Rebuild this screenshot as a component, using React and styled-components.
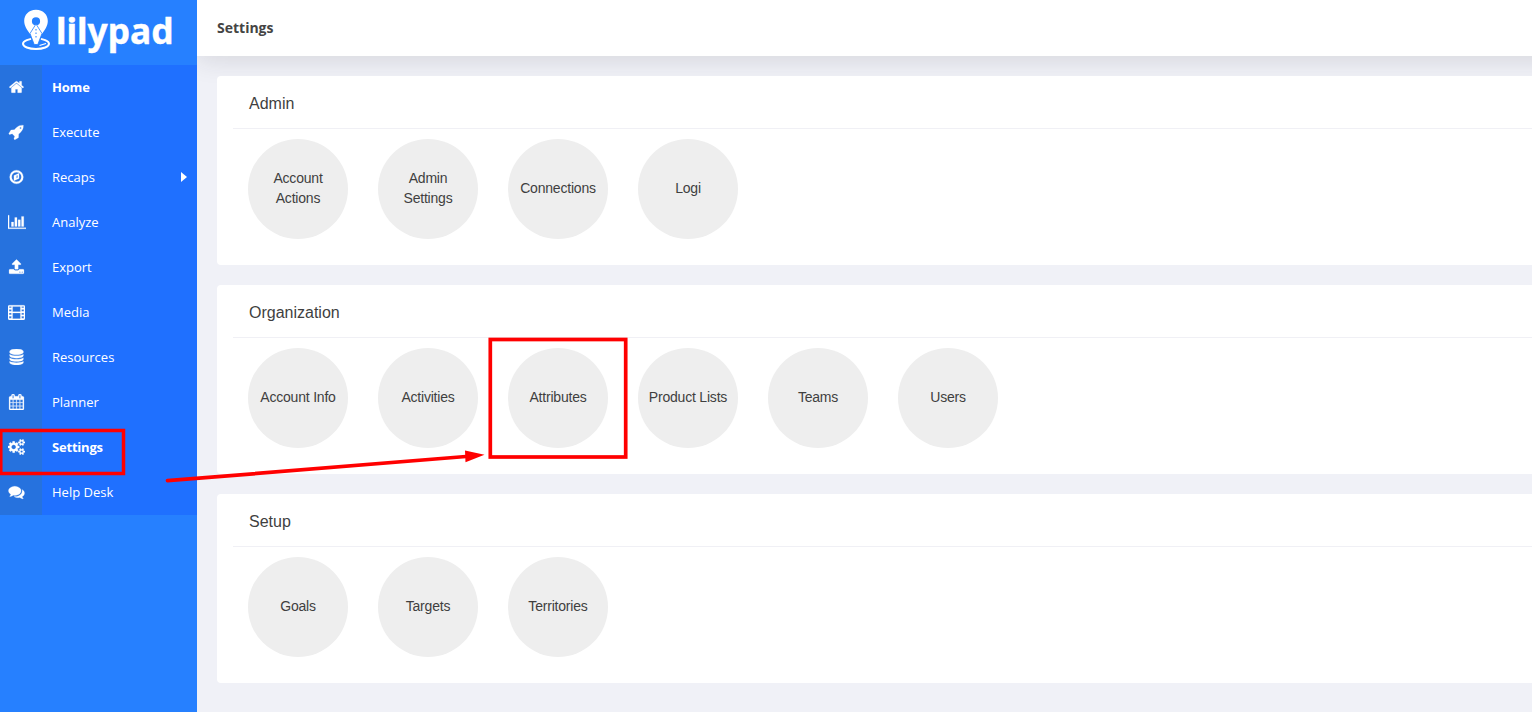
import React from 'react';
import styled, { createGlobalStyle } from 'styled-components';

const GlobalStyle = createGlobalStyle`
  * {
    box-sizing: border-box;
  }

  body {
    margin: 0;
    overflow: hidden;
    background-color: #f0f1f7;
    font-family: 'Open Sans', sans-serif;
  }
`;

const Layout = styled.div`
  position: relative;
  display: flex;
  width: 100%;
  height: 100vh;
  overflow: hidden;
`;

/*Sidebar*/
const Sidebar = styled.aside`
  z-index: 2;
  flex: none;
  width: 197px;
  background-color: #2680ff;
`;

const Brand = styled.div`
  display: flex;
  height: 65px;
  padding: 4px 0 0 18px;
`;

const NavItem = styled.a`
  display: flex;
  align-items: stretch;
  height: 45px;
  background-color: #1f70ff;
  color: #fff;
  font-size: 13px;
  font-weight: ${(props) => (props.$bold ? 700 : 400)};
  letter-spacing: ${(props) => (props.$bold ? '-0.2px' : 'normal')};
  line-height: 44px;
  cursor: pointer;
`;

const NavIcon = styled.span`
  display: flex;
  justify-content: center;
  align-items: center;
  width: 42px;
  padding: 0 9px 2px 0;
  background-color: #2672de;

  svg {
    flex: none;
    height: 16px;
    fill: currentColor;
    stroke: currentColor;
    stroke-width: 24px;
  }
`;

const NavLabel = styled.span`
  flex: 1;
  padding-left: 10px;
`;

const Caret = styled.span`
  align-self: center;
  margin-right: 10px;
  margin-bottom: 1px;
  border: 5px solid transparent;
  border-left: 6px solid #fff;
  border-right: 0;
`;

/*Main Body*/
const Main = styled.main`
  display: flex;
  flex: 1;
  flex-direction: column;
  min-width: 0;
`;

const TopBar = styled.header`
  display: flex;
  flex: none;
  align-items: center;
  height: 56px;
  margin-right: -40px;
  padding: 0 0 2px 20px;
  background-color: #fff;
  box-shadow: 0 4px 26px rgba(40, 40, 50, 0.13);
  color: #444;
  font-size: 14px;
  font-weight: 700;
`;

const Panels = styled.div`
  position: relative;
  display: flex;
  flex-direction: column;
  gap: 20px;
  padding: 20px 0 0 20px;
`;

const Panel = styled.section`
  height: 189px;
  padding-left: 16px;
  background-color: #fff;
  border-radius: 4px 0 0 4px;
  color: #3f3f3f;
  font-family: 'Liberation Sans', Arial, sans-serif;
`;

const PanelTitle = styled.h2`
  height: 53px;
  margin: 0;
  padding-left: 16px;
  border-bottom: 1px solid #f0f0f5;
  font-size: 16px;
  font-weight: 400;
  line-height: 56px;
`;

const Circles = styled.div`
  display: flex;
  gap: 30px;
  padding: 10px 0 0 15px;
`;

const Circle = styled.a`
  display: flex;
  justify-content: center;
  align-items: center;
  width: 100px;
  height: 100px;
  padding: 0 5px 2px;
  border-radius: 50%;
  background-color: #eee;
  font-size: 14px;
  letter-spacing: -0.2px;
  line-height: 20px;
  text-align: center;
  white-space: pre-line;
  cursor: pointer;
`;

const Markup = styled.svg`
  position: absolute;
  top: 0;
  left: 0;
  z-index: 3;
  pointer-events: none;
`;

const smallCog =
  'v140q0 16-149 31-12 27-30 52 51 113 51 138 0 4-4 7-122 71-124 71-8 0-46-47t-52-68q-20 2-30 2t-30-2q-14 21-52 68t-46 47q-2 0-124-71-4-3-4-7 0-25 51-138-18-25-30-52-149-15-149-31v-140q0-16 149-31 13-29 30-52-51-113-51-138 0-4 4-7 4-2 35-20t59-34 30-16q8 0 46 46.5t52 67.5q20-2 30-2t30 2q51-71 92-112l6-2q4 0 124 70 4 3 4 7 0 25-51 138 17 23 30 52 149 15 149 31z';

const icons = {
  home: {
    path: 'M1472 992v480q0 26-19 45t-45 19h-384v-384h-256v384h-384q-26 0-45-19t-19-45v-480q0-1 .5-3t.5-3l575-474 575 474q1 2 1 6zm223-69l-62 74q-8 9-21 11h-3q-13 0-21-7l-692-577-692 577q-12 8-24 7-13-2-21-11l-62-74q-8-10-7-23.5t11-21.5l719-599q32-26 76-26t76 26l244 204v-195q0-14 9-23t23-9h192q14 0 23 9t9 23v408l219 182q10 8 11 21.5t-7 23.5z',
  },
  rocket: {
    path: 'M1440 448q0-40-28-68t-68-28-68 28-28 68 28 68 68 28 68-28 28-68zm224-288q0 249-75.5 430.5t-253.5 360.5q-81 80-195 176l-20 379q-2 16-16 26l-384 224q-7 4-16 4-12 0-23-9l-64-64q-13-14-8-32l85-276-281-281-276 85q-3 1-9 1-14 0-23-9l-64-64q-17-19-5-39l224-384q10-14 26-16l379-20q96-114 176-195 188-187 358-258t431-71q14 0 24 9.5t10 22.5z',
  },
  compass: {
    path: 'M896 128a768 768 0 1 0 0 1536a768 768 0 1 0 0-1536zM896 352a544 544 0 1 1 0 1088a544 544 0 1 1 0-1088zM1184 464v600l-576 264v-600zM896 768v256l128-64v-256z',
  },
  chart: {
    viewWidth: 2048,
    width: 18,
    path: 'M640 896v512h-256v-512h256zm384-512v1024h-256v-1024h256zm1024 1152v128h-2048v-1536h128v1408h1920zm-640-896v768h-256v-768h256zm384-384v1152h-256v-1152h256z',
  },
  upload: {
    path: 'M1344 1472q0-26-19-45t-45-19-45 19-19 45 19 45 45 19 45-19 19-45zm256 0q0-26-19-45t-45-19-45 19-19 45 19 45 45 19 45-19 19-45zm128-224v320q0 40-28 68t-68 28h-1472q-40 0-68-28t-28-68v-320q0-40 28-68t68-28h427q21 56 70.5 92t110.5 36h256q61 0 110.5-36t70.5-92h427q40 0 68 28t28 68zm-325-648q-17 40-59 40h-256v448q0 26-19 45t-45 19h-256q-26 0-45-19t-19-45v-448h-256q-42 0-59-40-17-39 14-69l448-448q18-19 45-19t45 19l448 448q31 30 14 69z',
  },
  film: {
    viewWidth: 1920,
    path: 'M160 128h1600q160 0 160 160v1344q0 160-160 160h-1600q-160 0-160-160v-1344q0-160 160-160zM128 270v160h256v-160zM128 620v192h256v-192zM128 1004v192h256v-192zM128 1388v200h256v-200zM520 264v600h880v-600zM520 1004v644h880v-644zM1536 270v160h256v-160zM1536 620v192h256v-192zM1536 1004v192h256v-192zM1536 1388v200h256v-200z',
  },
  database: {
    path: 'M896 768q237 0 443-43t325-127v170q0 69-103 128t-280 93.5-385 34.5-385-34.5-280-93.5-103-128v-170q119 84 325 127t443 43zm0 768q237 0 443-43t325-127v170q0 69-103 128t-280 93.5-385 34.5-385-34.5-280-93.5-103-128v-170q119 84 325 127t443 43zm0-384q237 0 443-43t325-127v170q0 69-103 128t-280 93.5-385 34.5-385-34.5-280-93.5-103-128v-170q119 84 325 127t443 43zm0-1152q208 0 385 34.5t280 93.5 103 128v128q0 69-103 128t-280 93.5-385 34.5-385-34.5-280-93.5-103-128v-128q0-69 103-128t280-93.5 385-34.5z',
  },
  calendar: {
    path: 'M192 1664h288v-288h-288v288zm352 0h320v-288h-320v288zm-352-352h288v-320h-288v320zm352 0h320v-320h-320v320zm-352-384h288v-288h-288v288zm736 736h320v-288h-320v288zm-384-736h320v-288h-320v288zm768 736h288v-288h-288v288zm-384-352h320v-320h-320v320zm-352-864v-288q0-13-9.5-22.5t-22.5-9.5h-64q-13 0-22.5 9.5t-9.5 22.5v288q0 13 9.5 22.5t22.5 9.5h64q13 0 22.5-9.5t9.5-22.5zm736 864h288v-320h-288v320zm-384-384h320v-288h-320v288zm384 0h288v-288h-288v288zm32-480v-288q0-13-9.5-22.5t-22.5-9.5h-64q-13 0-22.5 9.5t-9.5 22.5v288q0 13 9.5 22.5t22.5 9.5h64q13 0 22.5-9.5t9.5-22.5zm384-64v1280q0 52-38 90t-90 38h-1408q-52 0-90-38t-38-90v-1280q0-52 38-90t90-38h128v-96q0-66 47-113t113-47h64q66 0 113 47t47 113v96h384v-96q0-66 47-113t113-47h64q66 0 113 47t47 113v96h128q52 0 90 38t38 90z',
  },
  cogs: {
    viewWidth: 1920,
    path: `M896 896q0-106-75-181t-181-75-181 75-75 181 75 181 181 75 181-75 75-181zm768 512q0-52-38-90t-90-38-90 38-38 90q0 53 37.5 90.5t90.5 37.5 90.5-37.5 37.5-90.5zm0-1024q0-52-38-90t-90-38-90 38-38 90q0 53 37.5 90.5t90.5 37.5 90.5-37.5 37.5-90.5zm-384 421v185q0 10-7 19.5t-16 10.5l-155 24q-11 35-32 76 34 48 90 115 7 11 7 20 0 12-7 19-23 30-82.5 89.5t-78.5 59.5q-11 0-21-7l-115-90q-37 19-77 31-11 108-23 155-7 24-30 24h-186q-11 0-20-7.5t-10-17.5l-23-153q-34-10-75-31l-118 89q-7 7-20 7-11 0-21-8-144-133-144-160 0-9 7-19 10-14 41-53t47-61q-23-44-35-82l-152-24q-10-1-17-9.5t-7-19.5v-185q0-10 7-19.5t16-10.5l155-24q11-35 32-76-34-48-90-115-7-11-7-20 0-12 7-20 22-30 82-89t79-59q11 0 21 7l115 90q34-18 77-32 11-108 23-154 7-24 30-24h186q11 0 20 7.5t10 17.5l23 153q34 10 75 31l118-89q8-7 20-7 11 0 21 8 144 133 144 160 0 8-7 19-12 16-42 54t-45 60q23 48 34 82l152 23q10 2 17 10.5t7 19.5zM1920 1338${smallCog}M1920 314${smallCog}`,
  },
  comments: {
    path: 'M1408 768q0 139-94 257t-256.5 186.5-353.5 68.5q-86 0-176-16-124 88-278 128-36 9-86 16h-3q-11 0-20.5-8t-11.5-21q-1-3-1-6.5t.5-6.5 2-6l2.5-5 3.5-5.5 4-5 4.5-5 4-4.5q5-6 23-25t26-29.5 22.5-29 25-38.5 20.5-44q-124-72-195-177t-71-224q0-139 94-257t256.5-186.5 353.5-68.5 353.5 68.5 256.5 186.5 94 257zm384 256q0 120-71 224.5t-195 176.5q10 24 20.5 44t25 38.5 22.5 29 26 29.5 23 25q1 1 4 4.5t4.5 5 4 5 3.5 5.5l2.5 5 2 6 .5 6.5-1 6.5q-3 14-13 22t-22 7q-50-7-86-16-154-40-278-128-90 16-176 16-271 0-472-132 58 4 88 4 161 0 309-45t264-129q125-92 192-212t67-254q0-77-23-152 129 71 204 178t75 230z',
  },
};

const navItems = [
  { label: 'Home', icon: 'home', bold: true },
  { label: 'Execute', icon: 'rocket' },
  { label: 'Recaps', icon: 'compass', hasMenu: true },
  { label: 'Analyze', icon: 'chart' },
  { label: 'Export', icon: 'upload' },
  { label: 'Media', icon: 'film' },
  { label: 'Resources', icon: 'database' },
  { label: 'Planner', icon: 'calendar' },
  { label: 'Settings', icon: 'cogs', bold: true },
  { label: 'Help Desk', icon: 'comments' },
];

const panels = [
  {
    title: 'Admin',
    links: ['Account\nActions', 'Admin\nSettings', 'Connections', 'Logi'],
  },
  {
    title: 'Organization',
    links: [
      'Account Info',
      'Activities',
      'Attributes',
      'Product Lists',
      'Teams',
      'Users',
    ],
  },
  { title: 'Setup', links: ['Goals', 'Targets', 'Territories'] },
];

function Icon({ name }) {
  const { path, viewWidth = 1792, width = 17 } = icons[name];
  return (
    <svg viewBox={`0 0 ${viewWidth} 1792`} width={width}>
      <path fillRule="evenodd" d={path} />
    </svg>
  );
}

function Logo() {
  return (
    <svg width="160" height="54" viewBox="18 4 160 54" fill="#fff">
      <ellipse
        cx="36"
        cy="43.800"
        rx="13"
        ry="5.200"
        fill="none"
        stroke="#fff"
        strokeWidth="2"
      />
      <path
        fillRule="evenodd"
        d="M36 9.700C28.500 9.700 24.200 15 24.200 21C24.200 26 27 29.500 30 34H42C45 29.500 47.800 26 47.800 21C47.800 15 43.500 9.700 36 9.700ZM36 17.200a4.100 4.100 0 1 1 0 8.200a4.100 4.100 0 1 1 0-8.200Z"
      />
      {/* pen nib over the pin */}
      <path d="M30 36L34 47H38L42 36Z" fill="#2680ff" />
      <path
        d="M36 24L42 33.500L37.800 44.500H34.200L30 33.500Z"
        stroke="#2680ff"
        strokeWidth="0.800"
      />
      <path d="M36 29V39" stroke="#2680ff" strokeWidth="1" strokeDasharray="1.500 2" />
      <path d="M39.500 45.500L46 43.500" stroke="#fff" strokeWidth="1.300" />
      <text
        x="56"
        y="44"
        fontFamily="Noto Sans, sans-serif"
        fontSize="35"
        fontWeight="700"
        stroke="#fff"
        strokeWidth="0.400"
        textLength="117.500"
        lengthAdjust="spacingAndGlyphs"
      >
        lilypad
      </text>
    </svg>
  );
}

function App() {
  return (
    <Layout>
      <GlobalStyle />
      <Sidebar>
        <Brand>
          <Logo />
        </Brand>
        <nav>
          {navItems.map((item) => (
            <NavItem key={item.label} $bold={item.bold}>
              <NavIcon>
                <Icon name={item.icon} />
              </NavIcon>
              <NavLabel>{item.label}</NavLabel>
              {item.hasMenu && <Caret />}
            </NavItem>
          ))}
        </nav>
      </Sidebar>
      <Main>
        <TopBar>Settings</TopBar>
        <Panels>
          {panels.map((panel) => (
            <Panel key={panel.title}>
              <PanelTitle>{panel.title}</PanelTitle>
              <Circles>
                {panel.links.map((link) => (
                  <Circle key={link}>{link}</Circle>
                ))}
              </Circles>
            </Panel>
          ))}
        </Panels>
      </Main>
      {/* red callouts drawn over the page */}
      <Markup width="640" height="500" fill="none" stroke="#f00">
        <rect x="0.800" y="430.500" width="122.700" height="43" strokeWidth="3.500" />
        <rect x="490.300" y="339.500" width="135.400" height="117.500" strokeWidth="3.700" />
        <path d="M167.500 480.700L466 456.500" strokeWidth="3.700" strokeLinecap="round" />
        <path d="M465 450.500L484.500 454.700L465.500 462.200Z" fill="#f00" stroke="none" />
      </Markup>
    </Layout>
  );
}

export default App;
